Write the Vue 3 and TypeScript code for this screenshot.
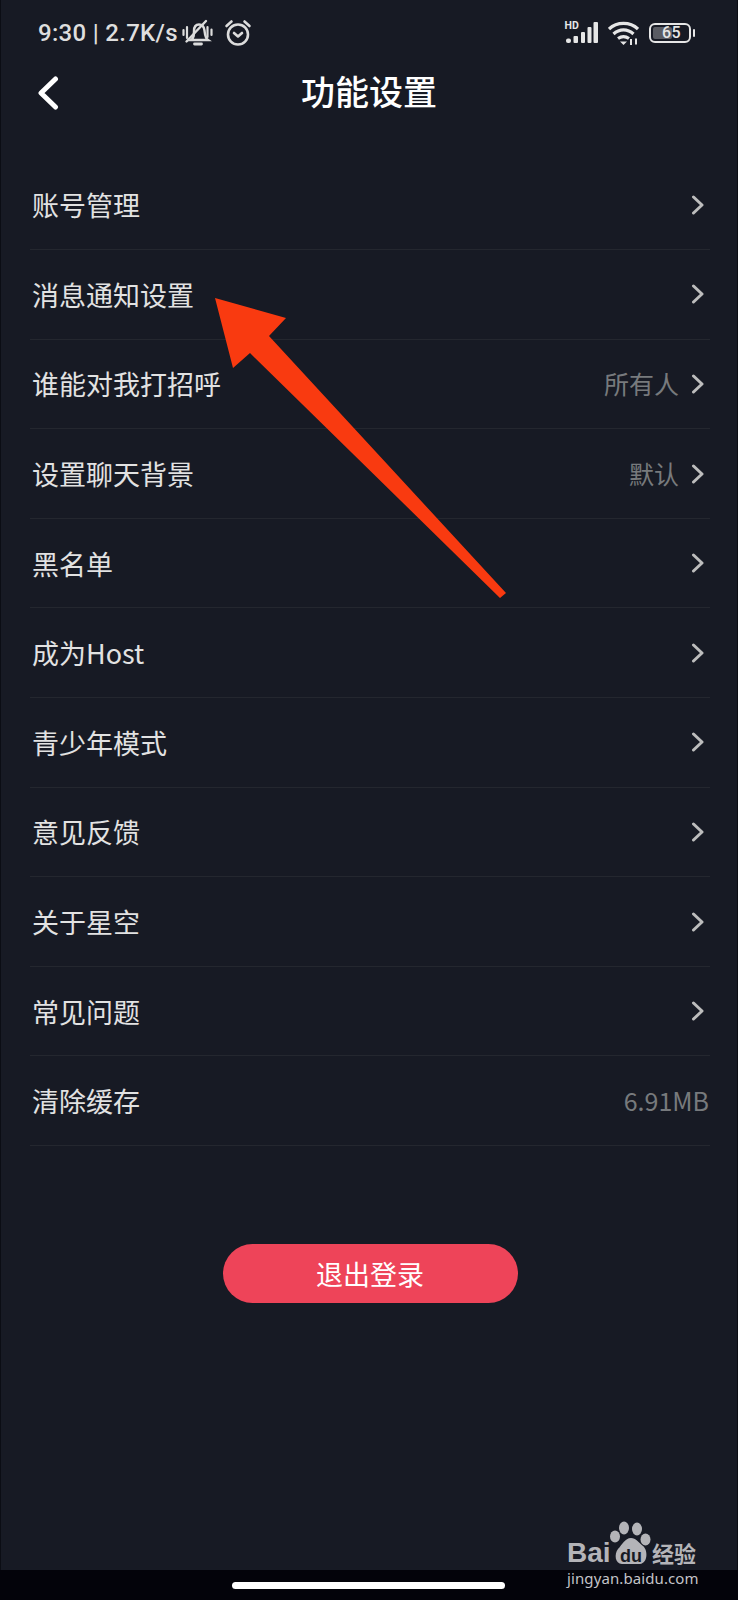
<template>
  <div class="page">
    <div class="status-bar">
      <div class="status-left">
        <span class="status-text">9:30 | 2.7K/s</span>
        <svg class="icon-bell" width="32" height="28" viewBox="0 0 32 28" fill="none" stroke="#dcdcdc" stroke-width="2.400">
          <path d="M9 21c3-2 3-5 3-9 0-4 2-6.500 5-6.500s5 2 5.500 6c.5 4 .5 7.500 3.500 9.500z" />
          <path d="M12.500 25h7" stroke-linecap="round" stroke-width="2.800" />
          <path d="M4.500 22.500 24 2" stroke-linecap="round" />
          <path d="M1.500 11v5M5 8v11M25.500 8v10M29.500 10.500v5.500" stroke-width="2.200" stroke-linecap="round" />
        </svg>
        <svg class="icon-alarm" width="28" height="28" viewBox="0 0 28 28" fill="none" stroke="#dcdcdc" stroke-width="2.600">
          <circle cx="14" cy="15.500" r="10" />
          <path d="M2.500 7 7.500 2.500M25.500 7 20.500 2.500" stroke-linecap="round" />
          <path d="m10 14 4 3.500 4-3.500" stroke-linecap="round" stroke-linejoin="round" />
        </svg>
      </div>
      <div class="status-right">
        <div class="signal">
          <span class="hd-text">HD</span>
          <svg class="icon-signal" width="34" height="23" viewBox="0 0 34 23">
            <rect x="1" y="17.500" width="5" height="4.500" rx="2" fill="#e6e6e6" />
            <rect x="8.500" y="15" width="4.500" height="7" rx="1" fill="#e6e6e6" />
            <rect x="16" y="11" width="4" height="11" rx="1" fill="#e6e6e6" />
            <rect x="22.500" y="6" width="4" height="16" rx="1" fill="#e6e6e6" />
            <rect x="28.500" y="1" width="4.500" height="21" rx="1" fill="#e6e6e6" />
          </svg>
        </div>
        <svg class="icon-wifi" width="31" height="24" viewBox="0 0 31 24" fill="none" stroke="#e6e6e6" stroke-width="3.200">
          <path d="M1 8C9 .5 22 .5 30 8" />
          <path d="M5.500 13c6-5.500 14-5.500 20 0" />
          <path d="M10 17.500c3.500-2.500 7.500-2.500 11 0" />
          <path d="m12 20.500 3.500 3.500 3.500-3.500z" fill="#e6e6e6" stroke="none" />
          <path d="M23 18v6M28 17.500v6" stroke-width="2" />
        </svg>
        <div class="battery">
          <div class="battery-body">
            <div class="battery-fill"></div>
            <span class="battery-num">65</span>
          </div>
          <div class="battery-tip"></div>
        </div>
      </div>
    </div>

    <header class="nav-header">
      <svg class="back-icon" width="22" height="34" viewBox="0 0 22 34" fill="none">
        <path d="M18.500 3 4 17l14.500 14" stroke="#fff" stroke-width="5" stroke-linecap="round" stroke-linejoin="round" />
      </svg>
      <h1 class="nav-title">功能设置</h1>
    </header>

    <ul class="setting-list">
      <li v-for="item in settings" :key="item.label" class="setting-row">
        <span class="setting-label">{{ item.label }}</span>
        <span v-if="item.value" class="setting-value" :class="{ 'no-arrow': !item.arrow }">{{ item.value }}</span>
        <svg v-if="item.arrow" class="chevron" width="14" height="20" viewBox="0 0 14 20" fill="none">
          <path d="m2.500 2 8.500 8-8.500 8" stroke="#bdbdbd" stroke-width="3" stroke-linecap="round" stroke-linejoin="round" />
        </svg>
      </li>
    </ul>

    <div class="logout-wrap">
      <button class="logout-btn">退出登录</button>
    </div>

    <div class="home-area">
      <div class="home-pill"></div>
    </div>

    <!-- 标注箭头 -->
    <svg class="annotation" width="738" height="1600" viewBox="0 0 738 1600">
      <polygon points="215,298 286,318 269,336 506,593 500,598 250,353 233,368" fill="#f93a10" />
    </svg>

    <!-- 水印 -->
    <div class="watermark">
      <div class="wm-top">
        <span class="wm-bai">Bai</span>
        <svg class="wm-paw" width="46" height="46" viewBox="0 0 46 46">
          <ellipse cx="17" cy="8" rx="5" ry="6.500" fill="#b4b4b8" />
          <ellipse cx="30" cy="9" rx="5" ry="6.500" fill="#b4b4b8" />
          <ellipse cx="8" cy="16.500" rx="5" ry="6" fill="#b4b4b8" />
          <ellipse cx="38.500" cy="19.500" rx="5" ry="6" fill="#b4b4b8" />
          <path d="M24 18c5 0 7 4 12 8 5 4 5 17-3 18H15C8 44 7 34 11 29c4-4 7-11 13-11z" fill="#b4b4b8" />
          <text x="24" y="42" class="wm-du">du</text>
        </svg>
        <span class="wm-cn">经验</span>
      </div>
      <div class="wm-url">jingyan.baidu.com</div>
    </div>
  </div>
</template>

<script setup lang="ts">
interface SettingItem {
  label: string
  value?: string
  arrow: boolean
}

const settings: SettingItem[] = [
  { label: '账号管理', arrow: true },
  { label: '消息通知设置', arrow: true },
  { label: '谁能对我打招呼', value: '所有人', arrow: true },
  { label: '设置聊天背景', value: '默认', arrow: true },
  { label: '黑名单', arrow: true },
  { label: '成为Host', arrow: true },
  { label: '青少年模式', arrow: true },
  { label: '意见反馈', arrow: true },
  { label: '关于星空', arrow: true },
  { label: '常见问题', arrow: true },
  { label: '清除缓存', value: '6.91MB', arrow: false }
]
</script>

<style>
html,
body {
  margin: 0;
  background: #03030a;
}
</style>

<style scoped>
.page {
  position: relative;
  width: 738px;
  height: 1600px;
  overflow: hidden;
  display: flex;
  flex-direction: column;
  background: #171a24;
  box-shadow: inset 1px 0 #0b0d14, inset -1px 0 #0b0d14;
  font-family: "Noto Sans CJK SC", "Noto Sans", sans-serif;
  color: #e6e6e6;
}

.status-bar {
  height: 62px;
  padding: 3px 43px 0 38px;
  box-sizing: border-box;
  display: flex;
  align-items: center;
  justify-content: space-between;
}

.status-left {
  display: flex;
  align-items: center;
}

.status-text {
  font-family: Roboto, sans-serif;
  font-size: 24px;
  font-weight: 500;
  color: #dedede;
  letter-spacing: 0.3px;
}

.icon-bell {
  margin-left: 4px;
}

.icon-alarm {
  margin-left: 10px;
}

.status-right {
  display: flex;
  align-items: center;
}

.signal {
  position: relative;
  width: 34px;
  height: 23px;
}

.icon-signal {
  display: block;
}

.hd-text {
  position: absolute;
  left: 0;
  top: 0;
  font-family: Roboto, sans-serif;
  font-size: 10.500px;
  font-weight: 700;
  line-height: 10px;
  color: #e6e6e6;
}

.icon-wifi {
  margin-left: 9px;
}

.battery {
  margin-left: 10px;
  display: flex;
  align-items: center;
}

.battery-body {
  position: relative;
  width: 42px;
  height: 20px;
  box-sizing: border-box;
  border: 2.500px solid #e6e6e6;
  border-radius: 6px;
  display: flex;
  align-items: center;
  justify-content: center;
}

.battery-fill {
  position: absolute;
  left: 2px;
  top: 2px;
  bottom: 2px;
  width: 19px;
  background: #5a5c63;
  border-radius: 2px;
}

.battery-num {
  position: relative;
  left: 2px;
  font-family: Roboto, sans-serif;
  font-size: 16px;
  font-weight: 500;
  line-height: 1;
  letter-spacing: 0.5px;
  color: #e6e6e6;
}

.battery-tip {
  width: 2.500px;
  height: 8px;
  margin-left: 2px;
  background: #e6e6e6;
  border-radius: 1px;
}

.nav-header {
  position: relative;
  height: 62px;
  padding-bottom: 4px;
  box-sizing: border-box;
  display: flex;
  align-items: center;
  justify-content: center;
}

.back-icon {
  position: absolute;
  left: 37px;
  top: 14px;
}

.nav-title {
  margin: 0;
  font-size: 34px;
  font-weight: 500;
  color: #fff;
  line-height: 1;
}

.setting-list {
  list-style: none;
  margin: 36.500px 0 0;
  padding: 0 28px 0 30px;
}

.setting-row {
  height: 89.600px;
  box-sizing: border-box;
  border-bottom: 1px solid #24272f;
  padding: 0 5px 0 2px;
  display: flex;
  align-items: center;
  gap: 12px;
}

.setting-label {
  flex: 1;
  font-size: 27px;
  line-height: 1;
  color: #e2e2e2;
}

.setting-value {
  font-size: 25px;
  line-height: 1;
  color: #777a7d;
}

.setting-value.no-arrow {
  margin-right: -4px;
}

.logout-wrap {
  margin-top: 98px;
  margin-left: 2px;
  display: flex;
  justify-content: center;
}

.logout-btn {
  width: 295px;
  height: 59px;
  border: none;
  border-radius: 30px;
  background: #ee4459;
  color: #fff;
  font-family: inherit;
  font-size: 27px;
}

.home-area {
  position: absolute;
  left: 0;
  right: 0;
  bottom: 0;
  height: 30px;
  background: #03030a;
}

.home-pill {
  position: absolute;
  left: 232px;
  top: 12px;
  width: 273px;
  height: 7px;
  border-radius: 4px;
  background: #fff;
}

.annotation {
  position: absolute;
  left: 0;
  top: 0;
  pointer-events: none;
}

.watermark {
  position: absolute;
  left: 567px;
  top: 1520px;
  width: 135px;
}

.wm-top {
  position: relative;
  height: 48px;
}

.wm-bai {
  position: absolute;
  left: 0;
  top: 17px;
  font-family: "Liberation Sans", sans-serif;
  font-size: 28px;
  font-weight: 700;
  line-height: 32px;
  color: #b4b4b8;
}

.wm-paw {
  position: absolute;
  left: 40px;
  top: 0;
}

.wm-du {
  font-family: "Liberation Sans", sans-serif;
  font-size: 18px;
  font-weight: 700;
  fill: #171a24;
  text-anchor: middle;
}

.wm-cn {
  position: absolute;
  left: 85px;
  top: 19px;
  font-size: 22px;
  font-weight: 700;
  line-height: 26px;
  color: #b4b4b8;
}

.wm-url {
  font-family: "Noto Sans", sans-serif;
  font-size: 15px;
  line-height: 20px;
  letter-spacing: 0.1px;
  color: #c4c4c8;
  white-space: nowrap;
}
</style>
